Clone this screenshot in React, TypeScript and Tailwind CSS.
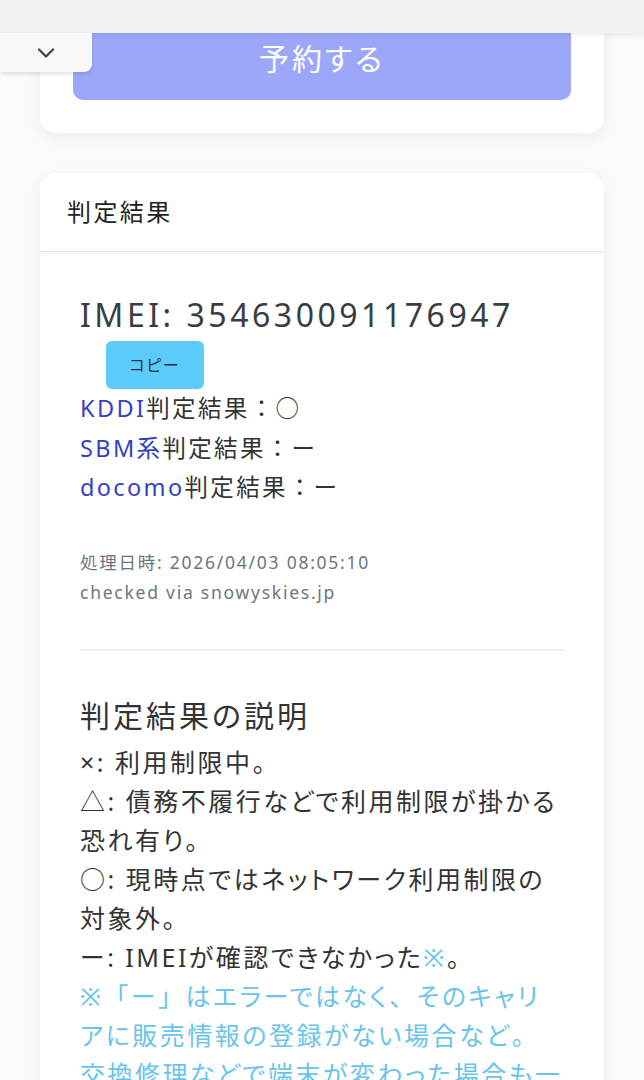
import type { ReactNode } from "react";
import { ChevronDown } from "lucide-react";

const FONT = "font-['Noto_Sans','Noto_Sans_CJK_JP',sans-serif] [font-feature-settings:'palt']";

// full-width punctuation keeps its full em box
function FW({ children }: { children: ReactNode }) {
  return <span className="[font-feature-settings:normal]">{children}</span>;
}

function CarrierLine({ name, mark }: { name: string; mark: string }) {
  return (
    <p className="text-[23.5px] leading-[39.5px] tracking-[0.1em] text-[#333]">
      <span className="text-[#3341c2]">{name}</span>判定結果<FW>：</FW>
      {mark}
    </p>
  );
}

const NOTE = "text-[#68c4ea]";

export default function App() {
  return (
    <div className={`relative min-h-screen overflow-hidden bg-[#fafafa] ${FONT}`}>
      {/* fixed top bar + drawer toggle */}
      <div className="absolute inset-x-0 top-0 z-20 h-[33px] bg-[#f1f1f1] shadow-[0_2px_6px_rgba(0,0,0,0.08)]" />
      <button className="absolute left-0 top-[33px] z-20 flex h-[39px] w-[92px] items-center justify-center rounded-br-lg bg-[#f8f8f8] shadow-[0_2px_4px_rgba(0,0,0,0.12)]">
        <ChevronDown className="h-7 w-7 text-[#444]" strokeWidth={2} />
      </button>

      <div className="mx-10 flex flex-col gap-10 pb-10">
        {/* reservation card (scrolled partly off) */}
        <div className="rounded-2xl bg-white px-[33px] pb-[33px] pt-4 shadow-[0_4px_16px_rgba(0,0,0,0.06)]">
          <button className="flex h-[84px] w-full items-center justify-center rounded-[10px] bg-[#9ca7fa] text-[30px] tracking-[0.1em] text-white">
            予約する
          </button>
        </div>

        {/* result card */}
        <div className="overflow-hidden rounded-2xl bg-white shadow-[0_4px_16px_rgba(0,0,0,0.06)]">
          <div className="flex h-[79px] items-center border-b border-[#e8e8e8] px-[27px] shadow-[0_2px_4px_rgba(0,0,0,0.05)]">
            <h2 className="text-[24px] tracking-[0.1em] text-[#222]">判定結果</h2>
          </div>

          <div className="px-10 pb-10 pt-10">
            <p className="text-[32px] leading-[46px] tracking-[0.11em] text-[#383c44]">
              IMEI: 354630091176947
            </p>
            <button className="ml-[26px] mt-[3px] flex h-[48px] w-[98px] items-center justify-center rounded-md bg-[#5bcbfa] text-[16px] tracking-[0.1em] text-[#1c2b4c]">
              コピー
            </button>
            <CarrierLine name="KDDI" mark="○" />
            <CarrierLine name="SBM系" mark="ー" />
            <CarrierLine name="docomo" mark="ー" />

            <div className="mt-[39px] text-[17.5px] leading-[30px] tracking-[0.1em] text-[#6c757d]">
              <p>処理日時: 2026/04/03 08:05:10</p>
              <p>checked via snowyskies.jp</p>
            </div>

            <hr className="mt-[42px] border-t-2 border-[#efefef]" />

            <h3 className="mt-[43px] text-[30px] leading-[44px] tracking-[0.1em] text-[#333]">
              判定結果の説明
            </h3>
            <div className="mt-[5px] text-[25px] leading-[39px] tracking-[0.1em] text-[#333]">
              <p>×: 利用制限中。</p>
              <p>△: 債務不履行などで利用制限が掛かる恐れ有り。</p>
              <p>○: 現時点ではネットワーク利用制限の対象外。</p>
              <p>
                ー: IMEIが確認できなかった<span className={NOTE}>※</span>。
              </p>
              <p className={NOTE}>
                ※<FW>「</FW>ー<FW>」</FW>はエラーではなく<FW>、</FW>そのキャリアに販売情報の登録がない場合など<FW>。</FW>
                交換修理などで端末が変わった場合も一部<FW>「</FW>ー<FW>」</FW>となります<FW>。</FW>
              </p>
            </div>
          </div>
        </div>
      </div>
    </div>
  );
}
